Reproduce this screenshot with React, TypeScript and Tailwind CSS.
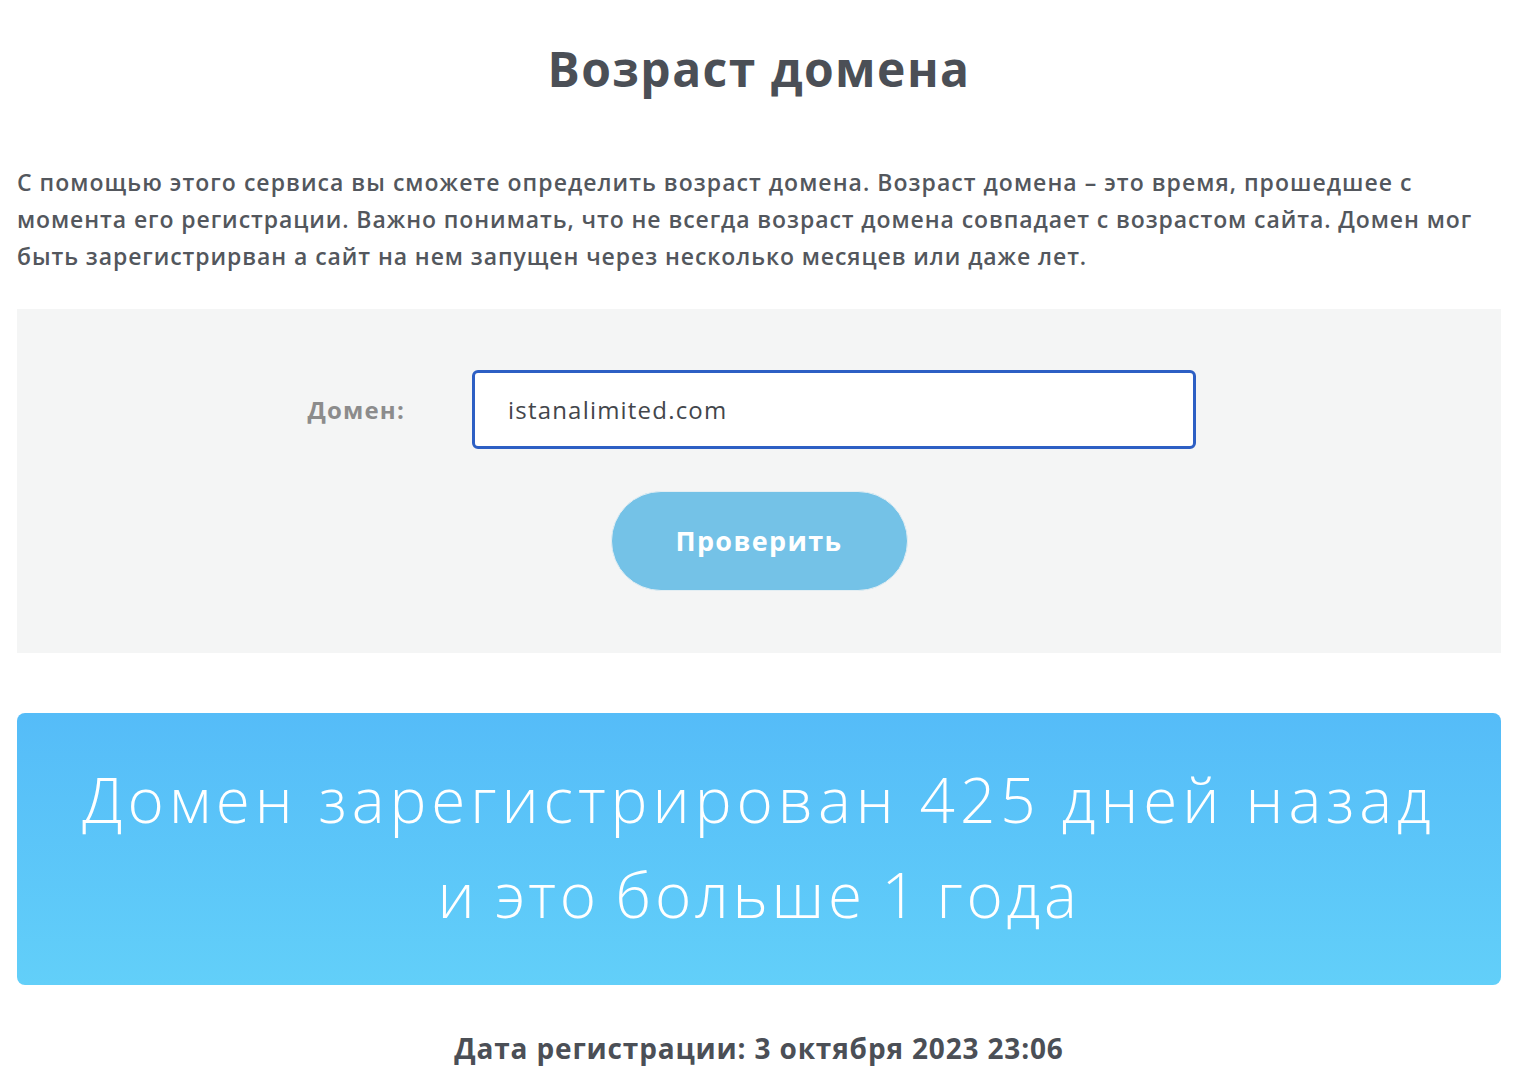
export default function App() {
  return (
    <div className="min-h-screen bg-white px-[17px] pt-[36px]" style={{ fontFamily: '"Open Sans", sans-serif' }}>
      <h1 className="text-center text-[48px] font-bold leading-[66px] tracking-[0.03em] text-[#4b4f56]">
        Возраст домена
      </h1>

      <p className="mt-[62px] text-[23px] font-semibold leading-[37px] tracking-[0.045em] text-[#53575d]">
        С помощью этого сервиса вы сможете определить возраст домена. Возраст домена – это время, прошедшее с
        <br />
        <span className="tracking-[0.04em]">
          момента его регистрации. Важно понимать, что не всегда возраст домена совпадает с возрастом сайта. Домен мог
        </span>
        <br />
        <span className="tracking-[0.04em]">
          быть зарегистрирван а сайт на нем запущен через несколько месяцев или даже лет.
        </span>
      </p>

      <div className="mt-[34px] flex flex-col items-center bg-[#f4f5f5] pt-[61px] pb-[62px]">
        <div className="flex w-full items-center">
          <label className="w-[455px] pr-[67px] text-right text-[24px] font-bold tracking-[0.05em] text-[#8c8c8c]">
            Домен:
          </label>
          <div className="flex h-[79px] w-[724px] items-center rounded-[6px] border-[3px] border-[#2d5fc4] bg-white px-[33px] text-[24px] tracking-[0.05em] text-[#43464b]">
            istanalimited.com
          </div>
        </div>
        <button className="mt-[42px] h-[100px] w-[297px] rounded-full border border-[#e3eef3] bg-[#74c2e7] text-[27px] font-bold tracking-[0.05em] text-white">
          Проверить
        </button>
      </div>

      <div className="mt-[60px] flex h-[272px] flex-col items-center justify-center rounded-[8px] bg-gradient-to-b from-[#55bcf8] to-[#62cff9] pb-[4px] text-center text-[62px] font-light leading-[95px] tracking-[0.08em] text-white">
        <div>Домен зарегистрирован 425 дней назад</div>
        <div className="tracking-[0.06em] [word-spacing:-4px]">и это больше 1 года</div>
      </div>

      <p className="mt-[42px] text-center text-[28px] font-bold tracking-[0.03em] text-[#4b4f56]">
        Дата регистрации: 3 октября 2023 23:06
      </p>
    </div>
  );
}
